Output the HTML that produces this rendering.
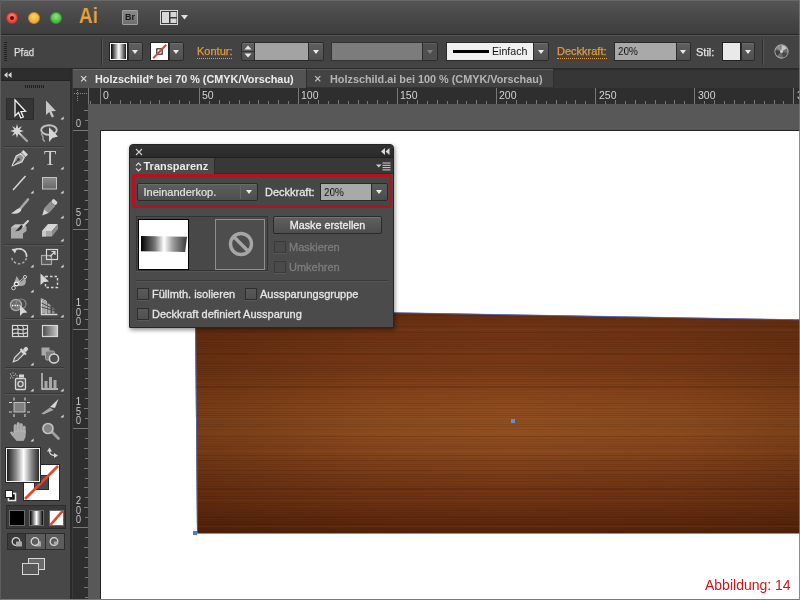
<!DOCTYPE html>
<html lang="de"><head><meta charset="utf-8"><title>Transparenz</title>
<style>
*{box-sizing:border-box;margin:0;padding:0}
html,body{width:800px;height:600px;overflow:hidden;background:#535353;font-family:"Liberation Sans",sans-serif;font-size:11px;color:#e0e0e0}
.abs,#titlebar,#ctrl,#tools,#tabs,#hruler,#vruler,#canvas,#panel,#caption,#frame{position:absolute}
#titlebar{left:0;top:0;width:800px;height:35px;background:linear-gradient(#555,#484848 50%,#3d3d3d);box-shadow:inset 0 1px 0 #686868;border-bottom:1px solid #262626}
#ctrl{left:0;top:35px;width:800px;height:34px;background:#434343;border-top:1px solid #555;border-bottom:1px solid #2a2a2a}
#tools{left:0;top:69px;width:70px;height:531px;background:#484848}
#tabs{left:73px;top:69px;width:727px;height:19px;background:#363636}
#hruler{left:73px;top:88px;width:727px;height:16px;background:#2e2e2e}
#vruler{left:73px;top:104px;width:15px;height:496px;background:#2e2e2e}
#canvas{left:88px;top:104px;width:712px;height:496px;background:#585858;overflow:hidden}
#gap{position:absolute;left:70px;top:69px;width:3px;height:531px;background:#2a2a2a;border-right:1px solid #3a3a3a}

#panel{left:129px;top:144px;width:265px;height:184px;background:#4b4b4b;border:1px solid #262626;border-radius:4px 4px 1px 1px;box-shadow:1px 2px 4px rgba(0,0,0,.45);overflow:hidden;color:#e6e6e6;font-size:11px}
#panel .top{left:0;top:0;width:263px;height:13px;background:linear-gradient(#333,#2a2a2a);border-bottom:1px solid #1f1f1f}
#panel .tabrow{left:0;top:13px;width:263px;height:16px;background:#383838;border-bottom:1px solid #2e2e2e}
#panel .tab{left:0;top:13px;width:85px;height:17px;background:#4b4b4b;border-right:1px solid #2c2c2c;font-weight:bold;font-size:11px;line-height:17px;padding-left:13.500px;color:#e8e8e8}
.red{left:2px;top:29px;width:260px;height:34px;border:3px solid #b5121f;border-radius:3px;background:#474747}
.dd{-webkit-text-stroke:.15px;left:7px;top:38px;width:121px;height:18px;border:1px solid #2b2b2b;border-radius:2px;background:linear-gradient(#5e5e5e,#4e4e4e);line-height:16px;padding-left:5.500px;box-shadow:inset 0 1px 0 rgba(255,255,255,.08)}
.dd i{position:absolute;left:102px;top:1px;width:1px;height:14px;background:#3a3a3a;border-right:1px solid #666}
.tri{position:absolute;width:0;height:0;border-left:3.500px solid transparent;border-right:3.500px solid transparent;border-top:4.500px solid #eaeaea}
.lbl{position:absolute;white-space:nowrap;line-height:13px;-webkit-text-stroke:.3px;margin-left:-1px}
.inp{left:190px;top:38px;width:52px;height:18px;background:#a9a9a9;border:1px solid #2a2a2a;color:#111;line-height:16px;padding-left:2.500px;font-size:11.500px}
.inpb{left:241px;top:38px;width:17px;height:18px;background:linear-gradient(#5c5c5c,#4c4c4c);border:1px solid #2a2a2a;border-radius:0 2px 2px 0}
.well{left:6px;top:71px;width:132px;height:55px;border:1px solid #333;background:#484848;box-shadow:0 1px 0 rgba(255,255,255,.06)}
.th1{left:8px;top:74px;width:51px;height:51px;background:#fff;border:1px solid #000}
.th2{left:85px;top:74px;width:50px;height:51px;border:1px solid #8e8e8e;background:#4d4d4d}
.btn{-webkit-text-stroke:.3px;left:143px;top:71px;width:109px;height:18px;border:1px solid #2a2a2a;border-radius:2px;background:linear-gradient(#606060,#4d4d4d);text-align:center;line-height:16px;color:#ececec;box-shadow:inset 0 1px 0 rgba(255,255,255,.12);font-size:10.8px}
.cb{position:absolute;width:11.500px;height:12px;border:1px solid #2e2e2e;background:linear-gradient(#5a5a5a,#505050);box-shadow:0 1px 0 rgba(255,255,255,.08)}
.cb.dis{border-color:#3a3a3a;background:#4a4a4a}
.sep{left:6px;top:135px;width:252px;height:1px;background:#3a3a3a;border-bottom:1px solid #565656;height:2px}
#caption{right:9px;top:577px;font-size:14px;color:#d4121a;white-space:nowrap}
#frame{left:0;top:0;width:800px;height:600px;border-left:1px solid #5c5c5c;border-right:1px solid rgba(120,120,120,.85);border-bottom:1px solid #7a7a7a;pointer-events:none}

.tl{position:absolute;top:12px;width:12px;height:12px;border-radius:50%}
.cbtn{position:absolute;top:6px;height:18.500px;border:1px solid #2c2c2c;border-radius:2px;background:linear-gradient(#5f5f5f,#4f4f4f);box-shadow:inset 0 1px 0 rgba(255,255,255,.1)}
.cbtn .tri{left:50%;margin-left:-3.500px;top:6.500px}
.clbl{-webkit-text-stroke:.25px;position:absolute;top:9.500px;line-height:13px;white-space:nowrap;font-size:11px}
.or{color:#e89a35;border-bottom:1px dotted #e89a35;line-height:11.500px;top:10px}
.fld{position:absolute;top:6px;height:18.500px;border:1px solid #2a2a2a}
.vsep{position:absolute;width:1px;background:#2e2e2e;border-right:1px solid #555;width:2px}

#tools{}
.tsep{left:5px;width:59px;height:2px;background:#383838;border-bottom:1px solid #575757}

#tabs{box-shadow:inset 0 1px 0 #2c2c2c;font-weight:bold;font-size:10.85px;white-space:nowrap}
.dtab{position:absolute;top:0;height:19px;line-height:20px;box-shadow:inset 0 1px 0 rgba(255,255,255,.12)}
.dtab span{position:absolute;top:0}
.rl{will-change:transform;position:absolute;font-size:10.500px;color:#d2d2d2;line-height:10px;font-family:"Liberation Sans",sans-serif}
.lbl,.clbl,.dtab span,#panel .tab,.btn,.dd,.inp,.fld,#caption,.gs{will-change:transform}
</style></head><body>
<div id="titlebar">
<span class="tl" style="left:6px;background:radial-gradient(circle at 50% 35%,#ff8a80,#e8413a 70%);border:1px solid #b7302a"><i class="abs" style="left:3px;top:3px;width:4px;height:4px;border-radius:50%;background:#5a0f0c"></i></span>
<span class="tl" style="left:28px;background:radial-gradient(circle at 50% 35%,#ffd36e,#f3ab2c 70%);border:1px solid #c88a22"></span>
<span class="tl" style="left:50px;background:radial-gradient(circle at 50% 35%,#8fe27d,#3fbf3a 70%);border:1px solid #36962f"></span>
<span class="abs" style="left:79px;top:3px;font-size:22px;font-weight:bold;color:#e9a23b;line-height:26px;transform:scaleX(.86);transform-origin:0 0;will-change:transform">Ai</span>
<span class="abs" style="left:122px;top:10px;width:16px;height:15px;background:linear-gradient(#8a8a8a,#6e6e6e);border:1px solid #a0a0a0;border-radius:1px;color:#1c1c1c;font-size:9px;font-weight:bold;line-height:13px;text-align:center"><span class="gs" style="display:block">Br</span></span>
<svg class="abs" style="left:160px;top:10px" width="30" height="15" viewBox="0 0 30 15"><rect x=".5" y=".5" width="17" height="14" fill="#3a3a3a" stroke="#d8d8d8"/><rect x="2" y="2" width="7" height="11" fill="#d8d8d8"/><rect x="10.5" y="2" width="6" height="5" fill="#d8d8d8"/><rect x="10.5" y="8.5" width="6" height="4.5" fill="#d8d8d8"/><path d="M21 5 H28 L24.5 9.5Z" fill="#e0e0e0"/></svg>
</div>
<div id="ctrl">
<div class="abs" style="left:4px;top:6px;width:3px;height:20px;background:repeating-linear-gradient(#222 0 1px,transparent 1px 2px)"></div>
<span class="clbl" style="left:13.500px;color:#e2e2e2;transform:scaleX(.89);transform-origin:0 0">Pfad</span>
<i class="vsep" style="left:101px;top:3px;height:26px"></i>
<div class="abs" style="left:110px;top:7px;width:17px;height:17px;border:1px solid #f4f4f4;background:linear-gradient(90deg,#000,#fff 52%,#1a1a1a);box-shadow:0 0 0 1px #222"></div>
<div class="cbtn" style="left:128px;width:15px;border-radius:0 2px 2px 0"><span class="tri"></span></div>
<div class="abs" style="left:151px;top:7px;width:17px;height:17px;background:#fff;box-shadow:0 0 0 1px #222"><svg width="17" height="17" viewBox="0 0 19 19"><rect x="6.5" y="6.500" width="6" height="6" fill="none" stroke="#111" stroke-width="1.2"/><path d="M2.5 17 L17 2" stroke="#e2452f" stroke-width="2.2"/></svg></div>
<div class="cbtn" style="left:169px;width:15px;border-radius:0 2px 2px 0"><span class="tri"></span></div>
<span class="clbl or" style="left:197px">Kontur:</span>
<div class="cbtn" style="left:241px;width:14px;border-radius:2px 0 0 2px"><svg width="12" height="17" viewBox="0 0 12 17"><path d="M2.5 6.500 L6 2.5 L9.500 6.500Z M2.5 10.5 L6 14.5 L9.500 10.5Z" fill="#e8e8e8"/><path d="M0 8.500 H12" stroke="#333"/></svg></div>
<div class="fld" style="left:254px;width:55px;background:#a3a3a3"></div>
<div class="cbtn" style="left:308px;width:16px;border-radius:0 2px 2px 0"><span class="tri"></span></div>
<div class="fld" style="left:331px;width:92px;background:#7c7c7c;border-color:#333"></div>
<div class="cbtn" style="left:422px;width:16px;border-radius:0 2px 2px 0;background:#4f4f4f"><span class="tri" style="border-top-color:#7e7e7e"></span></div>
<div class="fld" style="left:446px;width:88px;background:#f0f0f0;color:#111;font-size:11px;line-height:17px"><i class="abs" style="left:6px;top:7px;width:36px;height:3px;background:#000"></i><span class="abs" style="left:45px;top:0;font-size:10.600px">Einfach</span></div>
<div class="cbtn" style="left:533px;width:16px;border-radius:0 2px 2px 0"><span class="tri"></span></div>
<span class="clbl or" style="left:557px">Deckkraft:</span>
<div class="fld" style="left:614px;width:63px;background:#a9a9a9;color:#111;font-size:11.5px;line-height:17px;padding-left:2.500px"><span class="gs" style="display:inline-block;transform:scaleX(.86);transform-origin:0 50%">20%</span></div>
<div class="cbtn" style="left:676px;width:15px;border-radius:0 2px 2px 0"><span class="tri"></span></div>
<span class="clbl" style="left:696px;color:#e2e2e2">Stil:</span>
<div class="abs" style="left:723px;top:7px;width:17px;height:17px;background:#e9e9e9;box-shadow:0 0 0 1px #222"></div>
<div class="cbtn" style="left:741px;width:14px;border-radius:0 2px 2px 0"><span class="tri"></span></div>
<i class="vsep" style="left:762px;top:3px;height:26px"></i>
<svg class="abs" style="left:774px;top:8px" width="15" height="15" viewBox="0 0 16 16"><circle cx="8" cy="8" r="7" fill="#6c6c6c" stroke="#a8a8a8" stroke-width="1.2"/><path d="M8 8 L8 1.500 A6.500 6.500 0 0 1 13.600 4.700Z" fill="#c4c4c4"/><path d="M8 8 L14.300 9.500 A6.500 6.500 0 0 1 9.500 14.300Z" fill="#4a4a4a"/><path d="M8 8 L3.300 12.600 A6.500 6.500 0 0 1 1.700 6.500Z" fill="#3e3e3e"/><path d="M8 8 L2.500 4.500 A6.500 6.500 0 0 1 6.500 1.700Z" fill="#909090"/><circle cx="8" cy="8" r="1.600" fill="#cfcfcf"/></svg>
</div>
<div id="tools"><!--T-->
<div class="abs" style="left:0;top:0;width:71px;height:12px;background:#2d2d2d;border-bottom:1px solid #222"></div>
<svg class="abs" style="left:4px;top:3px" width="8" height="6" viewBox="0 0 8 6"><path d="M3.500 0 L0 3 L3.500 6Z M7.500 0 L4 3 L7.500 6Z" fill="#d8d8d8"/></svg>
<div class="abs" style="left:25px;top:16px;width:20px;height:3px;background:repeating-linear-gradient(90deg,#1e1e1e 0 1px,transparent 1px 2px)"></div>
<div class="abs" style="left:6px;top:29px;width:28px;height:22px;background:#353535;border:1px solid #2c2c2c"></div>
<svg class="abs" style="left:7px;top:28px" width="24" height="24" viewBox="0 0 24 24"><path d="M8 3 L8 19 L11.500 15.500 L13.800 21 L16.300 20 L14 14.600 L18.500 14.300Z" fill="#2b2b2b" stroke="#f0f0f0" stroke-width="1.300" stroke-linejoin="miter"/></svg>
<svg class="abs" style="left:37px;top:28px" width="24" height="24" viewBox="0 0 24 24"><path d="M9 3.500 L9 18 L12.200 15 L14.800 20.500 L17 19.500 L14.500 14.200 L19 14Z" fill="#c6c6c6"/></svg>
<svg class="abs" style="left:60px;top:47px" width="4" height="4" viewBox="0 0 4 4"><path d="M3.6 .4 V3.6 H.4Z" fill="#d8d8d8"/></svg>
<svg class="abs" style="left:7px;top:52px" width="24" height="24" viewBox="0 0 24 24"><path d="M10 10 L20 20" stroke="#a8a8a8" stroke-width="2.200" stroke-linecap="round"/><path d="M10 3 L11.200 7.300 L15 5 L12.700 8.800 L17 10 L12.700 11.200 L15 15 L11.200 12.700 L10 17 L8.800 12.700 L5 15 L7.300 11.200 L3 10 L7.300 8.800 L5 5 L8.800 7.300Z" fill="#d6d6d6"/></svg>
<svg class="abs" style="left:37px;top:52px" width="24" height="24" viewBox="0 0 24 24"><ellipse cx="12" cy="9" rx="7.8" ry="4.8" fill="none" stroke="#c2c2c2" stroke-width="1.9"/><path d="M5 12 C3 14 7 15 6 17 C5.500 19 7 20 8 20.500" fill="none" stroke="#a8a8a8" stroke-width="1.300"/><path d="M12 6 L12 21 L15.500 17 L21 15.500Z" fill="#d6d6d6"/></svg>
<div class="abs tsep" style="top:77px"></div>
<svg class="abs" style="left:7px;top:78px" width="24" height="24" viewBox="0 0 24 24"><g transform="rotate(45 12 12)"><path d="M12 21.500 L8 12 L9.500 7 L14.500 7 L16 12Z" fill="#8c8c8c" stroke="#d6d6d6" stroke-width="1.400" stroke-linejoin="round"/><path d="M12 20 L12 13.500" stroke="#3a3a3a" stroke-width="1"/><circle cx="12" cy="12.500" r="1.300" fill="#3a3a3a"/><rect x="8.800" y="2.500" width="6.400" height="3.300" fill="#d6d6d6"/></g></svg>
<svg class="abs" style="left:30px;top:97px" width="4" height="4" viewBox="0 0 4 4"><path d="M3.6 .4 V3.6 H.4Z" fill="#d8d8d8"/></svg>
<span class="abs" style="left:42px;top:78px;width:16px;text-align:center;font-family:'Liberation Serif',serif;font-size:20px;line-height:22px;color:#cfcfcf;will-change:transform">T</span>
<svg class="abs" style="left:60px;top:97px" width="4" height="4" viewBox="0 0 4 4"><path d="M3.6 .4 V3.6 H.4Z" fill="#d8d8d8"/></svg>
<svg class="abs" style="left:7px;top:102px" width="24" height="24" viewBox="0 0 24 24"><path d="M6 19 L18.500 5" stroke="#d6d6d6" stroke-width="1.500"/></svg>
<svg class="abs" style="left:30px;top:121px" width="4" height="4" viewBox="0 0 4 4"><path d="M3.6 .4 V3.6 H.4Z" fill="#d8d8d8"/></svg>
<svg class="abs" style="left:37px;top:102px" width="24" height="24" viewBox="0 0 24 24"><defs><linearGradient id="rg" x1="0" y1="0" x2="0" y2="1"><stop offset="0" stop-color="#8c8c8c"/><stop offset="1" stop-color="#686868"/></linearGradient></defs><rect x="5.500" y="6.500" width="14" height="11.500" fill="url(#rg)" stroke="#c4c4c4" stroke-width="1"/></svg>
<svg class="abs" style="left:60px;top:121px" width="4" height="4" viewBox="0 0 4 4"><path d="M3.6 .4 V3.6 H.4Z" fill="#d8d8d8"/></svg>
<svg class="abs" style="left:7px;top:127px" width="24" height="24" viewBox="0 0 24 24"><path d="M21 3.500 L13 13" stroke="#a8a8a8" stroke-width="2.600" stroke-linecap="round"/><path d="M12.800 12 L14.500 13.800 C13 17.500 9 18.500 4 17.200 C7.500 16 9 13 12.800 12Z" fill="#d6d6d6"/></svg>
<svg class="abs" style="left:37px;top:127px" width="24" height="24" viewBox="0 0 24 24"><g transform="rotate(42 12 12)"><rect x="9" y="2" width="6" height="4" rx="1.500" fill="#d6d6d6"/><rect x="9" y="6.500" width="6" height="9" fill="#909090" stroke="#a8a8a8" stroke-width=".6"/><path d="M9 16 L15 16 L12 22Z" fill="#d6d6d6"/></g></svg>
<svg class="abs" style="left:60px;top:146px" width="4" height="4" viewBox="0 0 4 4"><path d="M3.6 .4 V3.6 H.4Z" fill="#d8d8d8"/></svg>
<svg class="abs" style="left:7px;top:149px" width="24" height="24" viewBox="0 0 24 24"><path d="M4 9.500 L8 6.500 L18 6.500 L19.500 9 L19.500 13 L16 15.500 L16 20.500 L4 20.500Z" fill="#a8a8a8"/><path d="M4 9.500 L8 6.500 L18 6.500 L16 9.500Z" fill="#c4c4c4"/><path d="M21 3 L15.500 8.500" stroke="#d6d6d6" stroke-width="2" stroke-linecap="round"/><path d="M15.800 7.800 C15.500 11 12.500 13.500 8 13.200 C10.500 12 11.500 9 14.200 7Z" fill="#303030"/></svg>
<svg class="abs" style="left:37px;top:148px" width="24" height="24" viewBox="0 0 24 24"><path d="M5 14 L11 7 L21 7 L15 14Z" fill="#d6d6d6"/><path d="M5 14 L15 14 L15 19.500 L5 19.500Z" fill="#a8a8a8"/><path d="M15 14 L21 7 L21 12 L15 19.500Z" fill="#8a8a8a"/><path d="M5 14 L5 19.500 L9 19.500 L9 14Z" fill="#c8c8c8"/></svg>
<svg class="abs" style="left:60px;top:169px" width="4" height="4" viewBox="0 0 4 4"><path d="M3.6 .4 V3.6 H.4Z" fill="#d8d8d8"/></svg>
<div class="abs tsep" style="top:175px"></div>
<svg class="abs" style="left:7px;top:176px" width="24" height="24" viewBox="0 0 24 24"><path d="M8 5 A7.500 7.500 0 1 1 4.600 11" fill="none" stroke="#a8a8a8" stroke-width="1.500" stroke-dasharray="2.600 1.800"/><path d="M8 5 A7.500 7.500 0 0 1 19.500 12" fill="none" stroke="#d6d6d6" stroke-width="1.500"/><path d="M4.500 4 L10 3.500 L8 8.500Z" fill="#d6d6d6"/></svg>
<svg class="abs" style="left:30px;top:195px" width="4" height="4" viewBox="0 0 4 4"><path d="M3.6 .4 V3.6 H.4Z" fill="#d8d8d8"/></svg>
<svg class="abs" style="left:37px;top:176px" width="24" height="24" viewBox="0 0 24 24"><rect x="4.500" y="10.500" width="10" height="9" fill="#5a5a5a" stroke="#a8a8a8" stroke-width="1.200"/><rect x="9.500" y="4.500" width="11" height="10" fill="none" stroke="#d6d6d6" stroke-width="1.200"/><path d="M13 11.500 L18 6.500 M14.500 6.500 H18 V10" stroke="#d6d6d6" stroke-width="1.200" fill="none"/></svg>
<svg class="abs" style="left:60px;top:195px" width="4" height="4" viewBox="0 0 4 4"><path d="M3.6 .4 V3.6 H.4Z" fill="#d8d8d8"/></svg>
<svg class="abs" style="left:7px;top:201px" width="24" height="24" viewBox="0 0 24 24"><path d="M6 18 C6 13 8.500 11 9.500 6 C12 9 12.500 12 14 11.500 C16 10.500 17 8.500 18 8 C20 11 19 17 13 16 C10 15.500 8 16.500 6 18Z" fill="#a8a8a8"/><circle cx="6.500" cy="18" r="1.800" fill="#333" stroke="#d6d6d6" stroke-width="1"/><circle cx="9.500" cy="14" r="1.900" fill="#333" stroke="#fff" stroke-width="1.100"/><circle cx="18" cy="7" r="1.500" fill="#333" stroke="#d6d6d6" stroke-width="1"/><path d="M10.500 13 L17 7.500" stroke="#d6d6d6" stroke-width=".8"/></svg>
<svg class="abs" style="left:30px;top:220px" width="4" height="4" viewBox="0 0 4 4"><path d="M3.6 .4 V3.6 H.4Z" fill="#d8d8d8"/></svg>
<svg class="abs" style="left:37px;top:201px" width="24" height="24" viewBox="0 0 24 24"><rect x="8.500" y="6.500" width="12" height="11" fill="none" stroke="#d6d6d6" stroke-width="1.400" stroke-dasharray="2.500 2"/><path d="M3.500 3.500 L3.500 15 L7 12 L12 11.500Z" fill="#d6d6d6"/></svg>
<svg class="abs" style="left:7px;top:226px" width="24" height="24" viewBox="0 0 24 24"><circle cx="9" cy="10" r="5.500" fill="#6a6a6a" stroke="#a8a8a8" stroke-width="1.400"/><circle cx="14" cy="9" r="5" fill="none" stroke="#8a8a8a" stroke-width="1.200"/><path d="M5 10.500 H13" stroke="#fff" stroke-width="1.300" stroke-dasharray="1.300 1.200"/><path d="M13 10 L13 21 L16 18 L20.500 17.500Z" fill="#d6d6d6"/></svg>
<svg class="abs" style="left:30px;top:245px" width="4" height="4" viewBox="0 0 4 4"><path d="M3.6 .4 V3.6 H.4Z" fill="#d8d8d8"/></svg>
<svg class="abs" style="left:37px;top:226px" width="24" height="24" viewBox="0 0 24 24"><path d="M4.500 3.500 L4.500 19.500 L20 19.500 L20 17 L7 3.500Z" fill="none"/><path d="M4.500 3.500 V19.500 H20.500" stroke="#d6d6d6" stroke-width="1.400" fill="none"/><path d="M4.500 4 L9 6 V19 M9 6 L9 19" stroke="#d6d6d6" stroke-width="1"/><path d="M5 4.500 L8.500 6.200 V18.500 H5Z" fill="#a8a8a8"/><path d="M10.500 8 L13.500 10 V18.500 H10.500Z" fill="#a8a8a8"/><path d="M15 12 L17.500 13.500 V18.500 H15Z" fill="#8e8e8e"/><path d="M4.500 12 L20 16.500 M4.500 8 L20 15.500" stroke="#4a4a4a" stroke-width="1"/></svg>
<svg class="abs" style="left:60px;top:245px" width="4" height="4" viewBox="0 0 4 4"><path d="M3.6 .4 V3.6 H.4Z" fill="#d8d8d8"/></svg>
<div class="abs tsep" style="top:249px"></div>
<svg class="abs" style="left:8px;top:250px" width="24" height="24" viewBox="0 0 24 24"><rect x="4.500" y="6.500" width="15" height="11" fill="#3c3c3c" stroke="#d6d6d6" stroke-width="1.200"/><path d="M4.500 11 C9 8 13 13 19.500 9.500 M4.500 15 C9 12 13 17 19.500 13.500 M9 6.500 C12 10 8 14 11 17.500 M14.500 6.500 C17 10 13 14 16 17.500" stroke="#d6d6d6" stroke-width="1.100" fill="none"/></svg>
<svg class="abs" style="left:38px;top:250px" width="24" height="24" viewBox="0 0 24 24"><defs><linearGradient id="gg" x1="0" y1="0" x2="1" y2="0"><stop offset="0" stop-color="#4a4a4a"/><stop offset="1" stop-color="#c8c8c8"/></linearGradient></defs><rect x="4.500" y="6.500" width="15" height="11" fill="url(#gg)" stroke="#d6d6d6" stroke-width="1.200"/></svg>
<svg class="abs" style="left:8px;top:274px" width="24" height="24" viewBox="0 0 24 24"><g transform="rotate(45 12 12)"><rect x="10" y="1.500" width="4" height="5" rx="1.800" fill="#d6d6d6"/><rect x="8.200" y="6.300" width="7.600" height="2.200" fill="#d6d6d6"/><path d="M10 8.500 H14 V17.500 L12 21.500 L10 17.500Z" fill="#5a5a5a" stroke="#d6d6d6" stroke-width="1.200"/></g></svg>
<svg class="abs" style="left:30px;top:293px" width="4" height="4" viewBox="0 0 4 4"><path d="M3.6 .4 V3.6 H.4Z" fill="#d8d8d8"/></svg>
<svg class="abs" style="left:38px;top:274px" width="24" height="24" viewBox="0 0 24 24"><rect x="3.500" y="4.500" width="8" height="8" fill="#a8a8a8"/><rect x="7.500" y="8" width="9" height="9" rx="1.500" fill="#7c7c7c" stroke="#a8a8a8" stroke-width="1"/><circle cx="16" cy="15.500" r="4.600" fill="#4e4e4e" stroke="#d6d6d6" stroke-width="1.500"/></svg>
<div class="abs tsep" style="top:298px"></div>
<svg class="abs" style="left:7px;top:300px" width="24" height="24" viewBox="0 0 24 24"><rect x="8.500" y="9.500" width="10" height="11" rx="1" fill="#555" stroke="#d6d6d6" stroke-width="1.300"/><circle cx="13.500" cy="15" r="2.600" fill="none" stroke="#d6d6d6" stroke-width="1.300"/><rect x="12" y="5.500" width="5" height="3" fill="#d6d6d6"/><path d="M3 5 h1 M5.500 4 h1 M8 5 h1 M4 7 h1 M6.500 6.500 h1 M9.500 6.800 h1 M3 9 h1 M5.500 8.800 h1" stroke="#d6d6d6" stroke-width="1.100"/></svg>
<svg class="abs" style="left:30px;top:319px" width="4" height="4" viewBox="0 0 4 4"><path d="M3.6 .4 V3.6 H.4Z" fill="#d8d8d8"/></svg>
<svg class="abs" style="left:37px;top:300px" width="24" height="24" viewBox="0 0 24 24"><path d="M5 4 V20 H21" stroke="#d6d6d6" stroke-width="1.300" fill="none"/><rect x="7.500" y="12" width="3" height="7.500" fill="#a8a8a8"/><rect x="12" y="8" width="3" height="11.500" fill="#a8a8a8"/><rect x="16.500" y="11" width="3" height="8.500" fill="#a8a8a8"/></svg>
<svg class="abs" style="left:60px;top:319px" width="4" height="4" viewBox="0 0 4 4"><path d="M3.6 .4 V3.6 H.4Z" fill="#d8d8d8"/></svg>
<div class="abs tsep" style="top:324px"></div>
<svg class="abs" style="left:7px;top:326px" width="24" height="24" viewBox="0 0 24 24"><rect x="7" y="7.5" width="11" height="9.5" fill="#808080" stroke="#bdbdbd" stroke-width="1"/><path d="M7 2.5 V5.5 M18 2.5 V5.5 M7 19 V22 M18 19 V22 M2 7.5 H5 M2 17 H5 M20 7.5 H23 M20 17 H23" stroke="#d6d6d6" stroke-width="1.1"/></svg>
<svg class="abs" style="left:38px;top:326px" width="24" height="24" viewBox="0 0 24 24"><path d="M3.500 18.500 L12 12.500 L15.500 15 L5.500 19.500Z" fill="#a8a8a8"/><path d="M12 12 L20.500 4 L17 13Z" fill="#d6d6d6"/></svg>
<svg class="abs" style="left:60px;top:345px" width="4" height="4" viewBox="0 0 4 4"><path d="M3.6 .4 V3.6 H.4Z" fill="#d8d8d8"/></svg>
<svg class="abs" style="left:7px;top:350px" width="24" height="24" viewBox="0 0 24 24"><g fill="#a8a8a8" stroke="#c4c4c4" stroke-width=".5"><rect x="7" y="5.5" width="2.4" height="9" rx="1.2"/><rect x="10" y="3.5" width="2.4" height="10" rx="1.2"/><rect x="13" y="4.5" width="2.4" height="10" rx="1.2"/><rect x="16" y="7" width="2.3" height="8" rx="1.15"/><path d="M7 12 H18.3 V16 C18.3 19 17 20 16.500 21.500 H9.500 C8 19 5 17 3.300 13.500 C4.300 12.200 6 13 7 15Z"/></g></svg>
<svg class="abs" style="left:30px;top:369px" width="4" height="4" viewBox="0 0 4 4"><path d="M3.6 .4 V3.6 H.4Z" fill="#d8d8d8"/></svg>
<svg class="abs" style="left:38px;top:350px" width="24" height="24" viewBox="0 0 24 24"><path d="M14 13 L20.500 19.500" stroke="#a0a0a0" stroke-width="2.8" stroke-linecap="round"/><circle cx="10" cy="9.500" r="5" fill="#858585" stroke="#c2c2c2" stroke-width="1.7"/></svg>
<div class="abs" style="left:24px;top:396px;width:35px;height:35px;background:#fff;box-shadow:0 0 0 1px #262626"><div class="abs" style="left:10px;top:10px;width:15px;height:15px;background:#4a4a4a;border:1px solid #2a2a2a"></div><svg class="abs" style="left:0;top:0" width="35" height="35" viewBox="0 0 35 35"><path d="M1 34 L34 1" stroke="#e4452c" stroke-width="2.600"/></svg></div>
<div class="abs" style="left:6px;top:379px;width:34px;height:34px;border:1px solid #f2f2f2;background:linear-gradient(90deg,#1c1c1c,#8a8a8a 28%,#fff 52%,#8a8a8a 76%,#2a2a2a);box-shadow:0 0 0 1px #262626"></div>
<svg class="abs" style="left:46px;top:377px" width="13" height="13" viewBox="0 0 13 13"><path d="M3.500 5 C3.500 8 5 9.500 9 9.500" fill="none" stroke="#d6d6d6" stroke-width="1.300"/><path d="M1 5.500 L3.500 1.500 L6 5.500Z M8 7 L12 9.500 L8 12Z" fill="#d6d6d6"/></svg>
<svg class="abs" style="left:4px;top:420px" width="13" height="13" viewBox="0 0 13 13"><rect x="4.500" y="4.500" width="7" height="7" fill="#111" stroke="#e8e8e8" stroke-width="1.600"/><rect x="1.500" y="1.500" width="7" height="7" fill="#fff" stroke="#222" stroke-width="1"/></svg>
<div class="abs" style="left:6px;top:436px;width:60px;height:24px;background:#3a3a3a;border:1px solid #2c2c2c"></div>
<div class="abs" style="left:10px;top:442px;width:14px;height:14px;background:#000;box-shadow:0 0 0 1px #6a6a6a"></div>
<div class="abs" style="left:30px;top:442px;width:13px;height:14px;background:linear-gradient(90deg,#000,#fff 50%,#000);box-shadow:0 0 0 1px #6a6a6a"></div>
<div class="abs" style="left:50px;top:442px;width:13px;height:14px;background:#fff;box-shadow:0 0 0 1px #6a6a6a"><svg width="13" height="14" viewBox="0 0 14 16" class="abs" style="left:0;top:0"><path d="M0 16 L14 0" stroke="#e4452c" stroke-width="3"/></svg></div>
<div class="abs" style="left:7px;top:464px;width:58px;height:17px;background:#5c5c5c;border:1px solid #2c2c2c"><div class="abs" style="left:0;top:0;width:18px;height:15px;background:#3a3a3a;border-right:1px solid #2c2c2c"></div><div class="abs" style="left:37px;top:0;width:1px;height:15px;background:#2c2c2c"></div></div>
<svg class="abs" style="left:10px;top:467px" width="13" height="12" viewBox="0 0 13 12"><circle cx="6" cy="5.500" r="3.800" fill="none" stroke="#d6d6d6" stroke-width="1.300"/><rect x="6" y="5.500" width="6" height="5" fill="#a8a8a8"/></svg>
<svg class="abs" style="left:29px;top:467px" width="13" height="12" viewBox="0 0 13 12"><rect x="6" y="5.500" width="6" height="5" fill="#a8a8a8"/><circle cx="6" cy="5.500" r="3.800" fill="#5c5c5c" stroke="#d6d6d6" stroke-width="1.300"/></svg>
<svg class="abs" style="left:48px;top:467px" width="13" height="12" viewBox="0 0 13 12"><circle cx="6" cy="5.500" r="3.800" fill="none" stroke="#d6d6d6" stroke-width="1.300"/><path d="M6 5.500 H9.800 A3.800 3.800 0 0 1 6 9.300Z" fill="#a8a8a8"/></svg>
<svg class="abs" style="left:22px;top:489px" width="24" height="18" viewBox="0 0 24 18"><rect x="6.500" y=".5" width="16" height="11" fill="#6a6a6a" stroke="#d6d6d6" stroke-width="1"/><rect x=".5" y="5.500" width="16" height="11" fill="#585858" stroke="#d6d6d6" stroke-width="1"/></svg>
<!--/T--></div>
<div id="gap"></div>
<div id="tabs">
<div class="dtab" style="left:0;width:234px;background:#535353;border-right:1px solid #2e2e2e;color:#ececec"><svg class="abs" style="left:7px;top:5.500px" width="8" height="8" viewBox="0 0 8 8"><path d="M1.200 1.200 L6.300 6.300 M6.300 1.200 L1.200 6.300" stroke="#dcdcdc" stroke-width="1.200"/></svg><span style="left:22px">Holzschild* bei 70 % (CMYK/Vorschau)</span></div>
<div class="dtab" style="left:234px;width:247px;background:#434343;border-right:1px solid #2e2e2e;color:#b4b4b4;border-bottom:1px solid #333"><svg class="abs" style="left:7px;top:5.500px" width="8" height="8" viewBox="0 0 8 8"><path d="M1.200 1.200 L6.300 6.300 M6.300 1.200 L1.200 6.300" stroke="#c8c8c8" stroke-width="1.200"/></svg><span style="left:23px">Holzschild.ai bei 100 % (CMYK/Vorschau)</span></div>
</div>
<div id="hruler"><svg class="abs" style="left:0;top:0" width="727" height="16" viewBox="0 0 727 16"><path d="M17.5 16 V13 M27.5 16 V0 M37.5 16 V13 M47.5 16 V12 M57.5 16 V13 M67.5 16 V12 M77.5 16 V13 M86.5 16 V12 M96.5 16 V13 M106.5 16 V12 M116.5 16 V13 M126.5 16 V0 M136.5 16 V13 M146.5 16 V12 M156.5 16 V13 M166.5 16 V12 M176.5 16 V13 M185.5 16 V12 M195.5 16 V13 M205.5 16 V12 M215.5 16 V13 M225.5 16 V0 M235.5 16 V13 M245.5 16 V12 M255.5 16 V13 M265.5 16 V12 M275.5 16 V13 M285.5 16 V12 M294.5 16 V13 M304.5 16 V12 M314.5 16 V13 M324.5 16 V0 M334.5 16 V13 M344.5 16 V12 M354.5 16 V13 M364.5 16 V12 M374.5 16 V13 M384.5 16 V12 M393.5 16 V13 M403.5 16 V12 M413.5 16 V13 M423.5 16 V0 M433.5 16 V13 M443.5 16 V12 M453.5 16 V13 M463.5 16 V12 M473.5 16 V13 M483.5 16 V12 M493.5 16 V13 M502.5 16 V12 M512.5 16 V13 M522.5 16 V0 M532.5 16 V13 M542.5 16 V12 M552.5 16 V13 M562.5 16 V12 M572.5 16 V13 M582.5 16 V12 M592.5 16 V13 M601.5 16 V12 M611.5 16 V13 M621.5 16 V0 M631.5 16 V13 M641.5 16 V12 M651.5 16 V13 M661.5 16 V12 M671.5 16 V13 M681.5 16 V12 M691.5 16 V13 M701.5 16 V12 M710.5 16 V13 M720.5 16 V0" stroke="#787878" stroke-width="1" fill="none"/><path d="M15.500 0 V16" stroke="#787878"/><path d="M4.500 2 V14 M1 5.500 H15" stroke="#8a8a8a" stroke-dasharray="1 1"/></svg><span class="rl" style="left:30.2px;top:1.500px">0</span><span class="rl" style="left:129.2px;top:1.500px">50</span><span class="rl" style="left:228.3px;top:1.500px">100</span><span class="rl" style="left:327.3px;top:1.500px">150</span><span class="rl" style="left:426.4px;top:1.500px">200</span><span class="rl" style="left:525.5px;top:1.500px">250</span><span class="rl" style="left:624.5px;top:1.500px">300</span><span class="rl" style="left:723.5px;top:1.500px">350</span></div>
<div id="vruler"><svg class="abs" style="left:0;top:0" width="15" height="496" viewBox="0 0 15 496"><path d="M15 6.5 H11 M15 16.5 H12 M15 26.5 H0 M15 36.5 H12 M15 46.5 H11 M15 56.5 H12 M15 66.5 H11 M15 76.5 H12 M15 86.5 H11 M15 96.5 H12 M15 105.5 H11 M15 115.5 H12 M15 125.5 H0 M15 135.5 H12 M15 145.5 H11 M15 155.5 H12 M15 165.5 H11 M15 175.5 H12 M15 185.5 H11 M15 195.5 H12 M15 205.5 H11 M15 215.5 H12 M15 225.5 H0 M15 235.5 H12 M15 244.5 H11 M15 254.5 H12 M15 264.5 H11 M15 274.5 H12 M15 284.5 H11 M15 294.5 H12 M15 304.5 H11 M15 314.5 H12 M15 324.5 H0 M15 334.5 H12 M15 344.5 H11 M15 354.5 H12 M15 364.5 H11 M15 374.5 H12 M15 383.5 H11 M15 393.5 H12 M15 403.5 H11 M15 413.5 H12 M15 423.5 H0 M15 433.5 H12 M15 443.5 H11 M15 453.5 H12 M15 463.5 H11 M15 473.5 H12 M15 483.5 H11 M15 493.5 H12" stroke="#787878" stroke-width="1" fill="none"/></svg><span class="rl" style="left:1.500px;top:14.5px;width:7px;text-align:center;line-height:9.700px;transform:scaleX(.86)">0</span><span class="rl" style="left:1.500px;top:104.1px;width:7px;text-align:center;line-height:9.700px;transform:scaleX(.86)">5<br>0</span><span class="rl" style="left:1.500px;top:193.7px;width:7px;text-align:center;line-height:9.700px;transform:scaleX(.86)">1<br>0<br>0</span><span class="rl" style="left:1.500px;top:293.0px;width:7px;text-align:center;line-height:9.700px;transform:scaleX(.86)">1<br>5<br>0</span><span class="rl" style="left:1.500px;top:392.3px;width:7px;text-align:center;line-height:9.700px;transform:scaleX(.86)">2<br>0<br>0</span></div>
<div id="canvas">
<div class="abs" style="left:12px;top:26px;width:700px;height:470px;background:#fff;border-left:1px solid #222;border-top:1px solid #222"></div>
<svg class="abs" style="left:0;top:0" width="712" height="496" viewBox="0 0 712 496">
<defs>
<linearGradient id="wb" x1="0" y1="207" x2="0" y2="429" gradientUnits="userSpaceOnUse">
<stop offset="0" stop-color="#602a0f"/><stop offset=".05" stop-color="#6c3213"/><stop offset=".25" stop-color="#793a17"/><stop offset=".4" stop-color="#8a481d"/><stop offset=".5" stop-color="#925021"/><stop offset=".62" stop-color="#8a481d"/><stop offset=".78" stop-color="#763816"/><stop offset=".92" stop-color="#652d10"/><stop offset="1" stop-color="#53230b"/></linearGradient>
<linearGradient id="wh" x1="107" y1="0" x2="712" y2="0" gradientUnits="userSpaceOnUse">
<stop offset="0" stop-color="#3a1604" stop-opacity=".3"/><stop offset=".3" stop-color="#3a1604" stop-opacity=".06"/><stop offset=".52" stop-color="#3a1604" stop-opacity="0"/><stop offset=".8" stop-color="#3a1604" stop-opacity=".08"/><stop offset="1" stop-color="#3a1604" stop-opacity=".24"/></linearGradient>
<clipPath id="wc"><polygon points="107,205 712,215.5 712,429 109,429"/></clipPath>
</defs>
<g clip-path="url(#wc)">
<rect x="100" y="200" width="620" height="240" fill="url(#wb)"/>
<rect x="106" y="206" width="620" height="1" fill="#3a1604" opacity="0.14"/><rect x="106" y="209" width="620" height="1" fill="#3a1604" opacity="0.18"/><rect x="106" y="211" width="620" height="1" fill="#3a1604" opacity="0.14"/><rect x="106" y="215" width="620" height="1" fill="#3a1604" opacity="0.09"/><rect x="106" y="218" width="620" height="1" fill="#3a1604" opacity="0.08"/><rect x="106" y="222" width="620" height="1" fill="#3a1604" opacity="0.15"/><rect x="106" y="225" width="620" height="1" fill="#d08a48" opacity="0.10"/><rect x="106" y="228" width="620" height="1" fill="#3a1604" opacity="0.15"/><rect x="106" y="231" width="620" height="1" fill="#3a1604" opacity="0.07"/><rect x="106" y="233" width="620" height="1" fill="#3a1604" opacity="0.17"/><rect x="106" y="235" width="620" height="1" fill="#3a1604" opacity="0.18"/><rect x="106" y="238" width="620" height="1" fill="#3a1604" opacity="0.11"/><rect x="106" y="240" width="620" height="1" fill="#3a1604" opacity="0.13"/><rect x="106" y="242" width="620" height="1" fill="#3a1604" opacity="0.14"/><rect x="106" y="244" width="620" height="1" fill="#3a1604" opacity="0.11"/><rect x="106" y="246" width="620" height="1" fill="#3a1604" opacity="0.07"/><rect x="106" y="249" width="620" height="2" fill="#3a1604" opacity="0.19"/><rect x="106" y="253" width="620" height="1" fill="#3a1604" opacity="0.07"/><rect x="106" y="257" width="620" height="1" fill="#3a1604" opacity="0.10"/><rect x="106" y="259" width="620" height="1" fill="#3a1604" opacity="0.20"/><rect x="106" y="262" width="620" height="1" fill="#3a1604" opacity="0.14"/><rect x="106" y="264" width="620" height="1" fill="#3a1604" opacity="0.17"/><rect x="106" y="266" width="620" height="1" fill="#3a1604" opacity="0.20"/><rect x="106" y="268" width="620" height="1" fill="#3a1604" opacity="0.16"/><rect x="106" y="270" width="620" height="1" fill="#3a1604" opacity="0.17"/><rect x="106" y="272" width="620" height="1" fill="#3a1604" opacity="0.09"/><rect x="106" y="275" width="620" height="1" fill="#3a1604" opacity="0.17"/><rect x="106" y="277" width="620" height="1" fill="#3a1604" opacity="0.12"/><rect x="106" y="280" width="620" height="1" fill="#3a1604" opacity="0.10"/><rect x="106" y="282" width="620" height="2" fill="#3a1604" opacity="0.26"/><rect x="106" y="285" width="620" height="1" fill="#3a1604" opacity="0.12"/><rect x="106" y="288" width="620" height="1" fill="#3a1604" opacity="0.08"/><rect x="106" y="290" width="620" height="1" fill="#3a1604" opacity="0.10"/><rect x="106" y="293" width="620" height="1" fill="#3a1604" opacity="0.11"/><rect x="106" y="295" width="620" height="1" fill="#3a1604" opacity="0.10"/><rect x="106" y="299" width="620" height="1" fill="#3a1604" opacity="0.15"/><rect x="106" y="301" width="620" height="1" fill="#3a1604" opacity="0.09"/><rect x="106" y="304" width="620" height="1" fill="#3a1604" opacity="0.14"/><rect x="106" y="307" width="620" height="1" fill="#3a1604" opacity="0.09"/><rect x="106" y="309" width="620" height="1" fill="#3a1604" opacity="0.17"/><rect x="106" y="311" width="620" height="1" fill="#3a1604" opacity="0.19"/><rect x="106" y="313" width="620" height="1" fill="#3a1604" opacity="0.12"/><rect x="106" y="316" width="620" height="1" fill="#3a1604" opacity="0.12"/><rect x="106" y="318" width="620" height="1" fill="#3a1604" opacity="0.14"/><rect x="106" y="320" width="620" height="1" fill="#3a1604" opacity="0.16"/><rect x="106" y="322" width="620" height="1" fill="#3a1604" opacity="0.19"/><rect x="106" y="325" width="620" height="1" fill="#3a1604" opacity="0.09"/><rect x="106" y="329" width="620" height="1" fill="#d08a48" opacity="0.06"/><rect x="106" y="332" width="620" height="1" fill="#3a1604" opacity="0.18"/><rect x="106" y="335" width="620" height="1" fill="#3a1604" opacity="0.10"/><rect x="106" y="337" width="620" height="1" fill="#3a1604" opacity="0.08"/><rect x="106" y="340" width="620" height="1" fill="#3a1604" opacity="0.08"/><rect x="106" y="342" width="620" height="1" fill="#3a1604" opacity="0.14"/><rect x="106" y="344" width="620" height="1" fill="#3a1604" opacity="0.09"/><rect x="106" y="347" width="620" height="1" fill="#d08a48" opacity="0.10"/><rect x="106" y="351" width="620" height="1" fill="#3a1604" opacity="0.19"/><rect x="106" y="354" width="620" height="1" fill="#3a1604" opacity="0.07"/><rect x="106" y="356" width="620" height="1" fill="#3a1604" opacity="0.20"/><rect x="106" y="358" width="620" height="1" fill="#3a1604" opacity="0.08"/><rect x="106" y="360" width="620" height="1" fill="#3a1604" opacity="0.11"/><rect x="106" y="362" width="620" height="1" fill="#3a1604" opacity="0.14"/><rect x="106" y="366" width="620" height="1" fill="#3a1604" opacity="0.19"/><rect x="106" y="370" width="620" height="1" fill="#3a1604" opacity="0.17"/><rect x="106" y="372" width="620" height="1" fill="#3a1604" opacity="0.16"/><rect x="106" y="374" width="620" height="1" fill="#3a1604" opacity="0.19"/><rect x="106" y="377" width="620" height="1" fill="#3a1604" opacity="0.15"/><rect x="106" y="380" width="620" height="1" fill="#3a1604" opacity="0.07"/><rect x="106" y="382" width="620" height="1" fill="#3a1604" opacity="0.15"/><rect x="106" y="384" width="620" height="2" fill="#3a1604" opacity="0.23"/><rect x="106" y="389" width="620" height="1" fill="#3a1604" opacity="0.13"/><rect x="106" y="392" width="620" height="1" fill="#3a1604" opacity="0.15"/><rect x="106" y="394" width="620" height="1" fill="#3a1604" opacity="0.13"/><rect x="106" y="396" width="620" height="1" fill="#d08a48" opacity="0.06"/><rect x="106" y="399" width="620" height="1" fill="#3a1604" opacity="0.13"/><rect x="106" y="401" width="620" height="1" fill="#3a1604" opacity="0.09"/><rect x="106" y="404" width="620" height="1" fill="#3a1604" opacity="0.09"/><rect x="106" y="406" width="620" height="1" fill="#3a1604" opacity="0.13"/><rect x="106" y="408" width="620" height="1" fill="#3a1604" opacity="0.16"/><rect x="106" y="410" width="620" height="1" fill="#3a1604" opacity="0.17"/><rect x="106" y="412" width="620" height="2" fill="#3a1604" opacity="0.19"/><rect x="106" y="415" width="620" height="1" fill="#3a1604" opacity="0.13"/><rect x="106" y="417" width="620" height="1" fill="#3a1604" opacity="0.19"/><rect x="106" y="419" width="620" height="2" fill="#3a1604" opacity="0.15"/><rect x="106" y="422" width="620" height="1" fill="#d08a48" opacity="0.11"/><rect x="106" y="425" width="620" height="1" fill="#3a1604" opacity="0.13"/><rect x="106" y="427" width="620" height="1" fill="#3a1604" opacity="0.18"/>
<rect x="100" y="200" width="620" height="240" fill="url(#wh)"/>
</g>
<polygon points="107.5,205.3 712,215.8 712,429.5 109.5,429.5" fill="none" stroke="#4a6fd0" stroke-width="1" opacity=".75"/>
<rect x="105" y="427" width="4" height="4" fill="#3f7de8"/>
<rect x="423" y="315" width="4" height="4" fill="#5b8fe0"/>
</svg>
</div>
<div id="panel">
<div class="abs top"></div>
<svg class="abs" style="left:5px;top:3px" width="8" height="8" viewBox="0 0 8 8"><path d="M1 1 L7 7 M7 1 L1 7" stroke="#d0d0d0" stroke-width="1.1" fill="none"/></svg>
<svg class="abs" style="left:251px;top:3px" width="9" height="7" viewBox="0 0 9 7"><path d="M4 0 L0 3.5 L4 7Z M8.5 0 L4.5 3.5 L8.5 7Z" fill="#d8d8d8"/></svg>
<div class="abs tabrow"></div>
<div class="abs tab">Transparenz</div>
<svg class="abs" style="left:5px;top:17px" width="7" height="10" viewBox="0 0 7 10"><path d="M1 3.6 L3.5 1 L6 3.6 M1 6.4 L3.5 9 L6 6.4" stroke="#e0e0e0" stroke-width="1.15" fill="none"/></svg>
<svg class="abs" style="left:246px;top:17px" width="15" height="9" viewBox="0 0 15 9"><path d="M0 2.5 H5.5 L2.75 5.5Z" fill="#d0d0d0"/><path d="M6.5 1 H14.5 M6.5 3.3 H14.5 M6.5 5.6 H14.5 M6.5 7.9 H14.5" stroke="#d0d0d0" stroke-width="1"/></svg>
<div class="abs red"></div>
<div class="abs dd">Ineinanderkop.<i></i><span class="tri" style="left:108px;top:6px"></span></div>
<span class="lbl" style="left:136px;top:41px">Deckkraft:</span>
<div class="abs inp"><span class="gs" style="display:inline-block;transform:scaleX(.86);transform-origin:0 50%">20%</span></div>
<div class="abs inpb"><span class="tri" style="left:4px;top:6px"></span></div>
<div class="abs well"></div>
<div class="abs th1"><div class="abs" style="left:2px;top:16px;width:46px;height:16px;background:linear-gradient(90deg,#000,#777 30%,#fff 50%,#999 70%,#3a3a3a);clip-path:polygon(0 0,100% 4%,96% 100%,0 96%)"></div></div>
<div class="abs th2"><svg class="abs" style="left:12px;top:11px" width="26" height="26" viewBox="0 0 26 26"><circle cx="13" cy="13" r="10.5" fill="none" stroke="#a6a6a6" stroke-width="3.4"/><path d="M5.8 5.8 L20.2 20.2" stroke="#a6a6a6" stroke-width="3.4"/></svg></div>
<div class="abs btn">Maske erstellen</div>
<span class="cb dis" style="left:144px;top:96px"></span><span class="lbl" style="left:160px;top:96px;color:#7d7d7d">Maskieren</span>
<span class="cb dis" style="left:144px;top:116px"></span><span class="lbl" style="left:160px;top:116px;color:#7d7d7d">Umkehren</span>
<div class="abs sep"></div>
<span class="cb" style="left:7px;top:143px"></span><span class="lbl" style="left:23px;top:143px">Füllmth. isolieren</span>
<span class="cb" style="left:115px;top:143px"></span><span class="lbl" style="left:131px;top:143px">Aussparungsgruppe</span>
<span class="cb" style="left:7px;top:163px"></span><span class="lbl" style="left:23px;top:163px">Deckkraft definiert Aussparung</span>
</div>
<div id="caption">Abbildung: 14</div>
<div id="frame"></div>
</body></html>
